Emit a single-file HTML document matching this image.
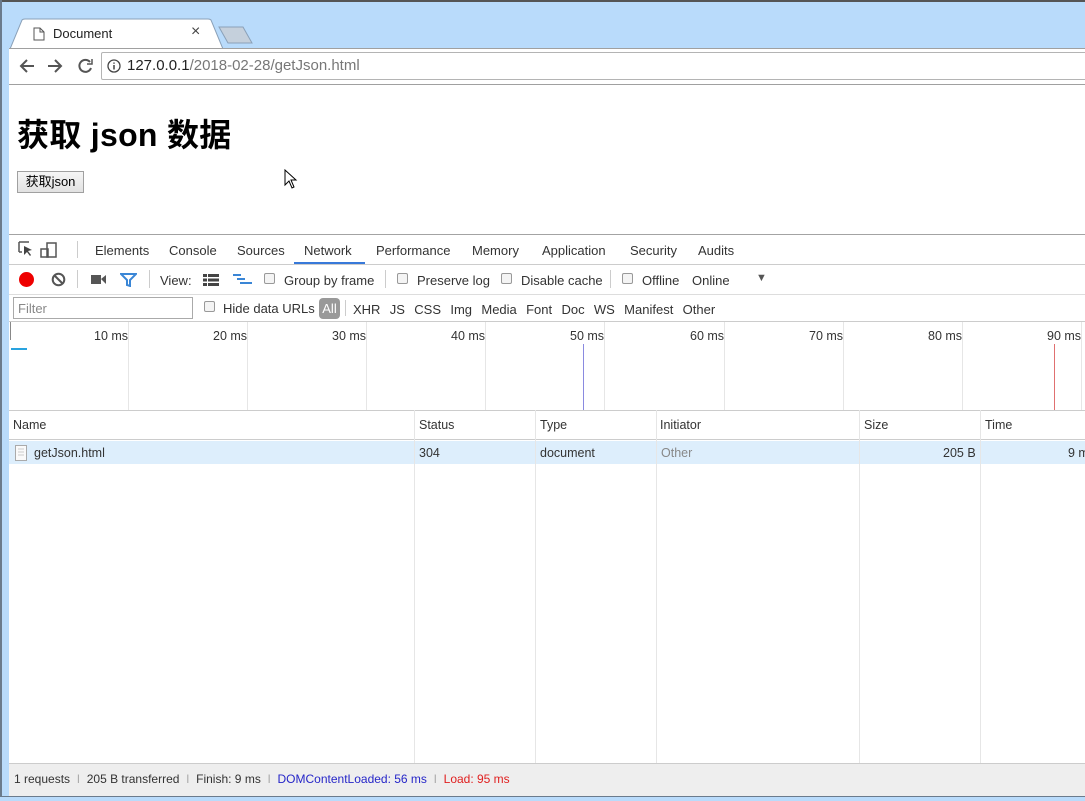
<!DOCTYPE html>
<html><head><meta charset="utf-8"><style>
*{margin:0;padding:0;box-sizing:border-box}
body{width:1085px;height:801px;overflow:hidden;background:#b9dbfb;font-family:"Liberation Sans","Noto Sans CJK SC",sans-serif;position:relative;color:#222}
.a{position:absolute}
.t{font-size:13px;color:#333;white-space:nowrap}
.sm{font-size:12.5px;color:#333;white-space:nowrap}
.cb{width:11px;height:11px;border:1px solid #999;border-radius:2px;background:#f4f4f4}
.vl{width:1px;background:#e6e6e6}
</style></head><body>
<div class="a" style="left:0;top:0;width:1085px;height:2px;background:#555"></div>
<div class="a" style="left:0;top:0;width:2px;height:801px;background:#6b7b8c"></div>
<svg class="a" style="left:10px;top:18px" width="250" height="32"><path d="M0 31 L12 2 Q13 1 15 1 L198 1 Q200 1 201 2 L213 31 Z" fill="#fff" stroke="#8aa0b8"/><path d="M209 9 L233 9 L242 25 L218 25 Z" fill="#c5d0dc" stroke="#8aa0b8"/></svg>
<svg class="a" style="left:33px;top:27px" width="12" height="14"><path d="M1 1 H7 L11 5 V13 H1 Z M7 1 V5 H11" fill="#fff" stroke="#555"/></svg>
<div class="a t" style="left:53px;top:26px;color:#222">Document</div>
<div class="a" style="left:191px;top:23px;font-size:16px;color:#444">×</div>
<div class="a" style="left:9px;top:48px;width:1076px;height:37px;background:#fff;border-top:1px solid #a0a0a0;border-bottom:1px solid #a0a0a0"></div>
<svg class="a" style="left:18px;top:57px" width="80" height="18"><g stroke="#555" stroke-width="2" fill="none"><path d="M16 9H3M9 3L3 9L9 15"/><path d="M30 9H43M37 3L43 9L37 15"/><path d="M72 5A6 6 0 1 0 73 11"/><path d="M74 2V7H69" stroke-width="1.5"/></g></svg>
<div class="a" style="left:101px;top:52px;width:990px;height:28px;border:1px solid #b4b4b4;border-radius:2px;background:#fff"></div>
<svg class="a" style="left:107px;top:59px" width="14" height="14"><circle cx="7" cy="7" r="6" fill="none" stroke="#444" stroke-width="1.3"/><path d="M7 6V10.5M7 3.5V4.8" stroke="#444" stroke-width="1.5"/></svg>
<div class="a" style="left:127px;top:57px;font-size:15px;color:#222">127.0.0.1<span style="color:#777">/2018-02-28/getJson.html</span></div>
<div class="a" style="left:9px;top:85px;width:1076px;height:150px;background:#fff"></div>
<div class="a" style="left:17px;top:110px;font-size:32px;font-weight:bold;color:#000;letter-spacing:0.3px">获取 json 数据</div>
<div class="a" style="left:17px;top:171px;width:67px;height:22px;border:1px solid #a0a0a0;background:linear-gradient(#f6f6f6,#e2e2e2);font-size:13px;color:#000;text-align:center;line-height:20px">获取json</div>
<svg class="a" style="left:284px;top:169px" width="14" height="20"><path d="M1 1V16L5 12L8 19L10 18L7 11H12Z" fill="#fff" stroke="#000"/></svg>
<div class="a" style="left:9px;top:234px;width:1076px;height:562px;background:#fff;border-top:1px solid #a3a3a3"></div>
<div class="a" style="left:9px;top:264px;width:1076px;height:1px;background:#ccc"></div>
<div class="a" style="left:9px;top:294px;width:1076px;height:1px;background:#ddd"></div>
<div class="a" style="left:9px;top:321px;width:1076px;height:1px;background:#ccc"></div>
<svg class="a" style="left:18px;top:240px" width="50" height="20"><path d="M1 2H11M1 2V12M1 12H4" stroke="#555" fill="none" stroke-width="1.5"/><path d="M6 6L14 10L10 11L13 15L12 16L9 12L6 15Z" fill="#444"/><rect x="29" y="3" width="9" height="14" fill="none" stroke="#555" stroke-width="1.5"/><rect x="23" y="9" width="7" height="8" fill="none" stroke="#555" stroke-width="1.5"/></svg>
<div class="a" style="left:77px;top:241px;width:1px;height:17px;background:#ccc"></div>
<div class="a t" style="left:95px;top:243px">Elements</div>
<div class="a t" style="left:169px;top:243px">Console</div>
<div class="a t" style="left:237px;top:243px">Sources</div>
<div class="a t" style="left:304px;top:243px">Network</div>
<div class="a" style="left:294px;top:262px;width:71px;height:2px;background:#3879d9"></div>
<div class="a t" style="left:376px;top:243px">Performance</div>
<div class="a t" style="left:472px;top:243px">Memory</div>
<div class="a t" style="left:542px;top:243px">Application</div>
<div class="a t" style="left:630px;top:243px">Security</div>
<div class="a t" style="left:698px;top:243px">Audits</div>
<div class="a" style="left:19px;top:272px;width:15px;height:15px;border-radius:50%;background:#e00"></div>
<svg class="a" style="left:51px;top:272px" width="15" height="15"><circle cx="7.5" cy="7.5" r="5.8" fill="none" stroke="#555" stroke-width="2"/><path d="M3.5 3.5L11.5 11.5" stroke="#555" stroke-width="2"/></svg>
<div class="a" style="left:77px;top:270px;width:1px;height:18px;background:#ccc"></div>
<svg class="a" style="left:91px;top:274px" width="16" height="11"><rect x="0" y="1" width="10" height="9" fill="#555"/><path d="M10 5L15 1V10Z" fill="#555"/></svg>
<svg class="a" style="left:120px;top:273px" width="17" height="14"><path d="M1 1H16L10 7V13L7 12V7Z" fill="#fff" stroke="#3a86d6" stroke-width="2"/></svg>
<div class="a" style="left:149px;top:270px;width:1px;height:18px;background:#ccc"></div>
<div class="a t" style="left:160px;top:273px">View:</div>
<svg class="a" style="left:203px;top:274px" width="16" height="12"><g fill="#444"><rect x="0" y="0" width="4" height="3"/><rect x="5" y="0" width="11" height="3"/><rect x="0" y="4.5" width="4" height="3"/><rect x="5" y="4.5" width="11" height="3"/><rect x="0" y="9" width="4" height="3"/><rect x="5" y="9" width="11" height="3"/></g></svg>
<svg class="a" style="left:233px;top:274px" width="19" height="12"><g fill="#3a86d6"><rect x="0" y="0" width="8" height="2"/><rect x="4" y="4" width="8" height="2"/><rect x="7" y="8" width="12" height="2"/></g></svg>
<div class="a cb" style="left:264px;top:273px"></div><div class="a t" style="left:284px;top:273px">Group by frame</div>
<div class="a" style="left:385px;top:270px;width:1px;height:18px;background:#ccc"></div>
<div class="a cb" style="left:397px;top:273px"></div><div class="a t" style="left:417px;top:273px">Preserve log</div>
<div class="a cb" style="left:501px;top:273px"></div><div class="a t" style="left:521px;top:273px">Disable cache</div>
<div class="a" style="left:610px;top:270px;width:1px;height:18px;background:#ccc"></div>
<div class="a cb" style="left:622px;top:273px"></div><div class="a t" style="left:642px;top:273px">Offline</div>
<div class="a t" style="left:692px;top:273px">Online</div>
<div class="a" style="left:756px;top:272px;font-size:11px;color:#555">▼</div>
<div class="a" style="left:13px;top:297px;width:180px;height:22px;border:1px solid #aaa;font-size:13px;color:#888;padding:3px 4px">Filter</div>
<div class="a cb" style="left:204px;top:301px"></div><div class="a t" style="left:223px;top:301px">Hide data URLs</div>
<div class="a" style="left:319px;top:298px;width:21px;height:21px;border-radius:4px;background:#999;color:#fff;font-size:13px;text-align:center;line-height:21px">All</div>
<div class="a" style="left:345px;top:300px;width:1px;height:16px;background:#ccc"></div>
<div class="a t" style="left:353px;top:302px;word-spacing:-0.5px">XHR&nbsp;&nbsp; JS&nbsp;&nbsp; CSS&nbsp;&nbsp; Img&nbsp;&nbsp; Media&nbsp;&nbsp; Font&nbsp;&nbsp; Doc&nbsp;&nbsp; WS&nbsp;&nbsp; Manifest&nbsp;&nbsp; Other</div>
<div class="a" style="left:10px;top:322px;width:1px;height:18px;background:#888"></div>
<div class="a" style="left:11px;top:348px;width:16px;height:2px;background:#29a3df"></div>
<div class="a vl" style="left:128px;top:322px;height:88px"></div>
<div class="a vl" style="left:247px;top:322px;height:88px"></div>
<div class="a vl" style="left:366px;top:322px;height:88px"></div>
<div class="a vl" style="left:485px;top:322px;height:88px"></div>
<div class="a vl" style="left:604px;top:322px;height:88px"></div>
<div class="a vl" style="left:724px;top:322px;height:88px"></div>
<div class="a vl" style="left:843px;top:322px;height:88px"></div>
<div class="a vl" style="left:962px;top:322px;height:88px"></div>
<div class="a vl" style="left:1081px;top:322px;height:88px"></div>
<div class="a" style="left:583px;top:344px;width:1px;height:66px;background:#8a8ae0"></div>
<div class="a" style="left:1054px;top:344px;width:1px;height:66px;background:#e07070"></div>
<div class="a sm" style="left:94px;top:329px">10 ms</div>
<div class="a sm" style="left:213px;top:329px">20 ms</div>
<div class="a sm" style="left:332px;top:329px">30 ms</div>
<div class="a sm" style="left:451px;top:329px">40 ms</div>
<div class="a sm" style="left:570px;top:329px">50 ms</div>
<div class="a sm" style="left:690px;top:329px">60 ms</div>
<div class="a sm" style="left:809px;top:329px">70 ms</div>
<div class="a sm" style="left:928px;top:329px">80 ms</div>
<div class="a sm" style="left:1047px;top:329px">90 ms</div>
<div class="a" style="left:9px;top:410px;width:1076px;height:1px;background:#ccc"></div>
<div class="a" style="left:9px;top:439px;width:1076px;height:1px;background:#ccc"></div>
<div class="a" style="left:9px;top:441px;width:1076px;height:23px;background:#ddeefc"></div>
<div class="a vl" style="left:414px;top:410px;height:353px"></div>
<div class="a vl" style="left:535px;top:410px;height:353px"></div>
<div class="a vl" style="left:656px;top:410px;height:353px"></div>
<div class="a vl" style="left:859px;top:410px;height:353px"></div>
<div class="a vl" style="left:980px;top:410px;height:353px"></div>
<div class="a sm" style="left:13px;top:418px">Name</div>
<div class="a sm" style="left:419px;top:418px">Status</div>
<div class="a sm" style="left:540px;top:418px">Type</div>
<div class="a sm" style="left:660px;top:418px">Initiator</div>
<div class="a sm" style="left:864px;top:418px">Size</div>
<div class="a sm" style="left:985px;top:418px">Time</div>
<svg class="a" style="left:15px;top:445px" width="12" height="16"><rect x="0.5" y="0.5" width="11" height="15" fill="#fafafa" stroke="#aaa"/><path d="M3 4H9M3 7H9M3 10H9" stroke="#ccc"/></svg>
<div class="a sm" style="left:34px;top:446px">getJson.html</div>
<div class="a sm" style="left:419px;top:446px">304</div>
<div class="a sm" style="left:540px;top:446px">document</div>
<div class="a sm" style="left:661px;top:446px;color:#888">Other</div>
<div class="a sm" style="left:943px;top:446px">205 B</div>
<div class="a sm" style="left:1068px;top:446px">9 m</div>
<div class="a" style="left:9px;top:763px;width:1076px;height:33px;background:#eee;border-top:1px solid #ccc"></div>
<div class="a sm" style="left:14px;top:772px;font-size:12px">1 requests <span style="color:#aaa">&nbsp;I&nbsp;</span> 205 B transferred <span style="color:#aaa">&nbsp;I&nbsp;</span> Finish: 9 ms <span style="color:#aaa">&nbsp;I&nbsp;</span> <span style="color:#2626c8">DOMContentLoaded: 56 ms</span> <span style="color:#aaa">&nbsp;I&nbsp;</span> <span style="color:#e02020">Load: 95 ms</span></div>
<div class="a" style="left:0;top:796px;width:1085px;height:5px;background:#b9dbfb;border-top:1px solid #6b7b8c"></div>
</body></html>
